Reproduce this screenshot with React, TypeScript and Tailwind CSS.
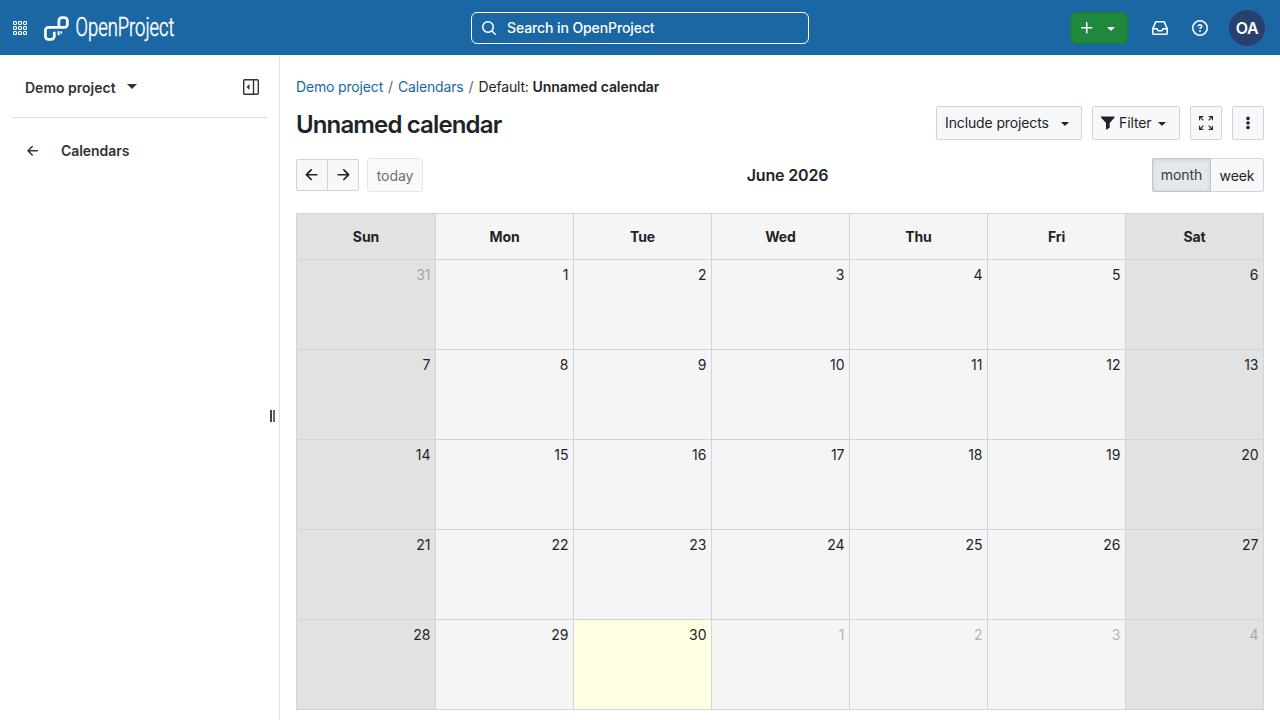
import { clsx } from "clsx";

const weekDays = ["Sun", "Mon", "Tue", "Wed", "Thu", "Fri", "Sat"];

// 31 May to 4 July, offset is relative to 31 May
const days = Array.from({ length: 35 }, (_, offset) => {
  if (offset === 0) return { day: 31, other: true };
  if (offset > 30) return { day: offset - 30, other: true };
  return { day: offset, other: false };
});

const icons = {
  inbox: "M2.8 2.06A1.75 1.75 0 0 1 4.41 1h7.18c.7 0 1.333.417 1.61 1.06l2.74 6.395c.04.093.06.194.06.295v4.5A1.75 1.75 0 0 1 14.25 15H1.75A1.75 1.75 0 0 1 0 13.25v-4.5c0-.101.02-.202.06-.295Zm1.61.44a.25.25 0 0 0-.23.152L1.887 8H4.75a.75.75 0 0 1 .6.3L6.625 10h2.75l1.275-1.7a.75.75 0 0 1 .6-.3h2.863L11.82 2.652a.25.25 0 0 0-.23-.152Zm10.09 7h-2.875l-1.275 1.7a.75.75 0 0 1-.6.3h-3.5a.75.75 0 0 1-.6-.3L4.375 9.5H1.5v3.75c0 .138.112.25.25.25h12.5a.25.25 0 0 0 .25-.25Z",
  question: "M0 8a8 8 0 1 1 16 0A8 8 0 0 1 0 8Zm8-6.5a6.5 6.5 0 1 0 0 13 6.5 6.5 0 0 0 0-13ZM6.92 6.085h.001a.749.749 0 1 1-1.342-.67c.169-.339.436-.701.849-.977C6.845 4.16 7.369 4 8 4a2.756 2.756 0 0 1 1.637.525c.503.377.863.965.863 1.725 0 .448-.115.83-.329 1.15-.205.307-.47.513-.692.662-.109.072-.22.138-.313.195l-.006.004a6.24 6.24 0 0 0-.26.16.952.952 0 0 0-.276.245.75.75 0 0 1-1.248-.832c.184-.264.42-.489.692-.661.103-.067.207-.132.313-.195l.007-.004c.1-.061.182-.11.258-.161a.969.969 0 0 0 .277-.245C8.96 6.514 9 6.427 9 6.25a.612.612 0 0 0-.262-.525A1.27 1.27 0 0 0 8 5.5c-.369 0-.595.09-.74.187a1.01 1.01 0 0 0-.34.398ZM9 11a1 1 0 1 1-2 0 1 1 0 0 1 2 0Z",
  search: "M10.68 11.74a6 6 0 0 1-7.922-8.982 6 6 0 0 1 8.982 7.922l3.04 3.04a.749.749 0 0 1-.326 1.275.749.749 0 0 1-.734-.215ZM11.5 7a4.499 4.499 0 1 0-8.997 0A4.499 4.499 0 0 0 11.5 7Z",
  plus: "M7.75 2a.75.75 0 0 1 .75.75V7h4.25a.75.75 0 0 1 0 1.5H8.5v4.25a.75.75 0 0 1-1.5 0V8.5H2.75a.75.75 0 0 1 0-1.5H7V2.75A.75.75 0 0 1 7.75 2Z",
  arrow: "M7.78 12.53a.75.75 0 0 1-1.06 0L2.47 8.28a.75.75 0 0 1 0-1.06l4.25-4.25a.751.751 0 0 1 1.042.018.751.751 0 0 1 .018 1.042L4.81 7h7.44a.75.75 0 0 1 0 1.5H4.81l2.97 2.97a.75.75 0 0 1 0 1.06Z",
  triangle: "m4.427 7.427 3.396 3.396a.25.25 0 0 0 .354 0l3.396-3.396A.25.25 0 0 0 11.396 7H4.604a.25.25 0 0 0-.177.427Z",
};

interface IconProps {
  name: keyof typeof icons;
  size?: number;
  className?: string;
}

const Icon = ({ name, size = 16, className }: IconProps) => (
  <svg width={size} height={size} viewBox="0 0 16 16" fill="currentColor" className={clsx("shrink-0", className)}>
    <path d={icons[name]} />
  </svg>
);

const Logo = () => {
  return (
    <svg width="180" height="34" viewBox="0 0 180 34" className="ml-[17px] overflow-visible">
      <g fill="none" stroke="#fff" strokeWidth="2.7" strokeLinejoin="round">
        <path d="M14.9 16.4V9.6a3 3 0 0 1 3-3h2.5a3 3 0 0 1 3 3v3.8a3 3 0 0 1-3 3H4.4a3 3 0 0 0-3 3v5.9a3 3 0 0 0 3 3h2.9a3 3 0 0 0 3-3v-4.6" />
        <path d="M14.6 20.2v4" strokeWidth="2" />
        <path d="M17.3 20.2v2.6" strokeWidth="1.6" />
      </g>
      <text x="31.5" y="24.7" fill="#fff" stroke="#fff" strokeWidth="0.5" fontFamily="Roboto, sans-serif" fontSize="25" fontWeight="300" textLength="99" lengthAdjust="spacingAndGlyphs">
        OpenProject
      </text>
    </svg>
  );
};

const Header = () => {
  return (
    <header className="h-[55px] shrink-0 bg-[#1a67a3] text-white flex items-center relative">
      <svg width="14" height="14" viewBox="0 0 14 14" className="ml-[13px]" fill="none" stroke="#fff" strokeWidth="1.2">
        {[0, 5, 10].map((y) => [0, 5, 10].map((x) => (
          <rect key={`${x}-${y}`} x={x + 0.5} y={y + 0.5} width="3" height="3" rx="1.1" />
        )))}
      </svg>
      <Logo />
      <div className="absolute left-[471px] top-3 w-[338px] h-8 border border-white rounded-md flex items-center pl-[9px] text-sm font-medium tracking-[-0.1px]">
        <Icon name="search" className="mr-[10px]" />
        Search in OpenProject
      </div>
      <div className="ml-auto flex items-center">
        <button type="button" className="w-[58px] h-8 mr-6 bg-[#1f883d] border border-[#1f7a3a] rounded-md flex items-center pl-2 gap-2">
          <Icon name="plus" />
          <Icon name="triangle" />
        </button>
        <Icon name="inbox" className="mr-6" />
        <Icon name="question" className="mr-[21px]" />
        <div className="w-9 h-9 mr-[15px] rounded-full bg-[#27406f] flex items-center justify-center text-base font-semibold tracking-[-0.3px]">OA</div>
      </div>
    </header>
  );
};

const Sidebar = () => {
  return (
    <aside className="w-[280px] shrink-0 border-r border-[#e0e3e6] px-3 relative text-[#333]">
      <div className="h-[63px] border-b border-[#dddddd] flex items-center pl-[13px] pr-[7px] pt-[2px]">
        <span className="text-sm font-semibold pt-[2px]">Demo project</span>
        <svg width="10" height="5" className="ml-[11px] -mt-[2px]" fill="#333"><path d="M0 0h10L5 5z" /></svg>
        <svg width="18" height="18" viewBox="0 0 18 18" className="ml-auto" fill="none" stroke="#333" strokeWidth="1.4">
          <rect x="1.7" y="1.7" width="14.6" height="14.6" rx="1" />
          <path d="M11.5 2v14" />
          <path d="M7.5 6v6L4.5 9z" fill="#333" stroke="none" />
        </svg>
      </div>
      <div className="flex items-center h-[66px] pl-[13px]">
        <Icon name="arrow" className="mr-5" />
        <span className="text-sm font-semibold tracking-[-0.05px]">Calendars</span>
      </div>
      <div className="absolute left-[270px] top-[355px] w-[5px] h-3 flex justify-between">
        <span className="w-[2px] bg-[#444]" />
        <span className="w-[2px] bg-[#666]" />
      </div>
    </aside>
  );
};

const toolButton = "h-[34px] border border-[#cbd5df] rounded-[2px] bg-[#f6f8fa] flex items-center text-[#1f2328] tracking-[-0.12px]";

const App = () => {
  return (
    <div className="h-screen overflow-hidden flex flex-col bg-white text-sm text-[#1f2328] font-['Inter',sans-serif]">
      <Header />
      <div className="flex grow min-h-0">
        <Sidebar />
        <main className="grow px-4">
          <nav className="h-5 mt-[22px] leading-5 flex whitespace-pre tracking-[-0.16px]">
            <a className="text-[#1a67a3]">Demo project</a>
            <span className="text-[#59636e] mx-[5px]">/</span>
            <a className="text-[#1a67a3]">Calendars</a>
            <span className="text-[#59636e] mx-[5px]">/</span>
            <span>Default: <b className="font-semibold tracking-[-0.06px]">Unnamed calendar</b></span>
          </nav>
          <div className="flex items-center h-[34px] mt-[9px]">
            <h1 className="text-2xl font-semibold mr-auto tracking-[-0.86px] pt-[3px]">Unnamed calendar</h1>
            <div className="flex gap-[10px]">
              <button type="button" className={`${toolButton} w-[146px] pl-2`}>
                Include projects <Icon name="triangle" className="ml-2" />
              </button>
              <button type="button" className={`${toolButton} w-[88px] pl-2`}>
                <svg width="14" height="14" viewBox="0 0 14 14" className="mr-1" fill="currentColor"><path d="M0 0.5h13.5v1L8.7 7v4.8L5 13.8V7L0 1.5z" /></svg>
                Filter <Icon name="triangle" className="ml-[3px]" />
              </button>
              <button type="button" className={`${toolButton} w-8 justify-center`}>
                <svg width="14" height="14" viewBox="0 0 14 14" fill="none" stroke="currentColor" strokeWidth="1.1">
                  <path d="M.6 4.3V.6h3.7M.6.6l3.8 3.8M9.7.6h3.7v3.7M13.4.6L9.6 4.4M.6 9.7v3.7h3.7M.6 13.4l3.8-3.8M13.4 9.7v3.7H9.7M13.4 13.4L9.6 9.6" />
                </svg>
              </button>
              <button type="button" className={`${toolButton} w-8 justify-center`}>
                <svg width="4" height="14" fill="currentColor"><circle cx="2" cy="2.4" r="1.8" /><circle cx="2" cy="7" r="1.8" /><circle cx="2" cy="11.6" r="1.8" /></svg>
              </button>
            </div>
          </div>
          <div className="mt-[18px] h-[34px] flex justify-between items-center">
            <div className="flex items-center">
              <div className="flex w-[63px] h-8 border border-[#cbd5df] rounded-[2px] bg-[#f8f8f8]">
                <span className="w-[31px] border-r border-[#cbd5df] flex items-center justify-center"><Icon name="arrow" size={18} /></span>
                <span className="w-[30px] flex items-center justify-center"><Icon name="arrow" size={18} className="-scale-x-100" /></span>
              </div>
              <button type="button" className="ml-2 w-14 h-[34px] pt-[2px] border border-[#e2e7eb] rounded-[3px] bg-[#fafafa] text-[#6c6d6f] tracking-[-0.1px]">today</button>
            </div>
            <h2 className="text-base font-semibold tracking-[-0.15px]">June 2026</h2>
            <div className="flex">
              <button type="button" className="w-[59px] h-[34px] border border-[#bfc5cb] rounded-l-[2px] bg-[#e4e8ed] text-[#333a40] tracking-[-0.1px] shadow-[inset_0_1px_4px_rgba(0,0,0,0.1)]">month</button>
              <button type="button" className="w-[53px] h-[34px] pt-[2px] border border-l-0 border-[#cbd5df] rounded-r-[3px] bg-[#f8f8f8] tracking-[-0.1px]">week</button>
            </div>
          </div>
          <div className="mt-[21px] border-l border-t border-[#ced6dd] grid grid-cols-[139px_repeat(6,138px)]">
            {weekDays.map((name) => (
              <div key={name} className={clsx("h-[46px] border-r border-b border-[#ced6dd] flex items-center justify-center font-bold tracking-[-0.1px]", name[0] === "S" ? "bg-[#e2e2e2]" : "bg-[#f5f5f5]")}>
                {name}
              </div>
            ))}
            {days.map(({ day, other }, i) => (
              <div
                key={i}
                className={clsx(
                  "h-[90px] border-r border-b border-[#ced6dd] text-right pr-[4.5px] pt-[5px] leading-5",
                  i === 30 ? "bg-[#ffffe3]" : i % 7 === 0 || i % 7 === 6 ? "bg-[#e2e2e2]" : "bg-[#f5f5f5]",
                  other && (i % 7 === 0 || i % 7 === 6 ? "text-[#a7a8a9]" : "text-[#b4b5b6]")
                )}
              >
                {day}
              </div>
            ))}
          </div>
        </main>
      </div>
    </div>
  );
};

export default App;
